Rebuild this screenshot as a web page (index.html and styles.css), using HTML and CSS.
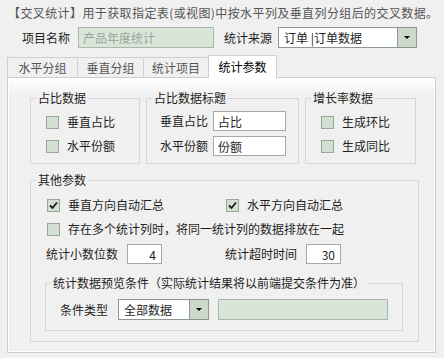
FILE: index.html
```html
<!DOCTYPE html>
<html lang="zh-CN">
<head>
    <meta charset="UTF-8">
    <meta name="viewport" content="width=device-width, initial-scale=1.0">
    <title>交叉统计</title>
    <link rel="stylesheet" href="styles.css">
</head>
<body>
    <p class="intro">【交叉统计】用于获取指定表(或视图)中按水平列及垂直列分组后的交叉数据。</p>

    <!-- 项目名称 / 统计来源 -->
    <div class="head-row">
        <label class="lbl">项目名称</label>
        <input class="txt name-input" type="text" value="产品年度统计" disabled>
        <label class="lbl source-lbl">统计来源</label>
        <div class="combo source-combo">
            <span class="combo-text">订单 |订单数据</span>
            <span class="combo-btn"></span>
        </div>
    </div>

    <div class="tabs">
        <div class="tab">水平分组</div>
        <div class="tab">垂直分组</div>
        <div class="tab">统计项目</div>
        <div class="tab active">统计参数</div>
    </div>

    <div class="panel">
        <div class="top-groups">
            <fieldset class="group">
                <legend>占比数据</legend>
                <div class="checks">
                    <label class="check"><span class="box"></span>垂直占比</label>
                    <label class="check"><span class="box"></span>水平份额</label>
                </div>
            </fieldset>

            <fieldset class="group">
                <legend>占比数据标题</legend>
                <div class="titles">
                    <div class="field">
                        <label>垂直占比</label>
                        <input class="txt title-input" type="text" value="占比">
                    </div>
                    <div class="field">
                        <label>水平份额</label>
                        <input class="txt title-input" type="text" value="份额">
                    </div>
                </div>
            </fieldset>

            <fieldset class="group">
                <legend>增长率数据</legend>
                <div class="checks">
                    <label class="check"><span class="box"></span>生成环比</label>
                    <label class="check"><span class="box"></span>生成同比</label>
                </div>
            </fieldset>
        </div>

        <fieldset class="group other">
            <legend>其他参数</legend>
            <div class="other-body">
                <div class="check-grid">
                    <label class="check">
                        <span class="box"><svg width="9" height="9" viewBox="0 0 9 9"><polyline points="1,4.5 3.5,7 8,1.5" fill="none" stroke="#1a1a1a" stroke-width="1.8"/></svg></span>垂直方向自动汇总
                    </label>
                    <label class="check">
                        <span class="box"><svg width="9" height="9" viewBox="0 0 9 9"><polyline points="1,4.5 3.5,7 8,1.5" fill="none" stroke="#1a1a1a" stroke-width="1.8"/></svg></span>水平方向自动汇总
                    </label>
                    <label class="check wide"><span class="box"></span>存在多个统计列时，将同一统计列的数据排放在一起</label>
                </div>

                <div class="field-row">
                    <div class="field">
                        <label>统计小数位数</label>
                        <input class="txt num-input" type="text" value="4">
                    </div>
                    <div class="field">
                        <label>统计超时时间</label>
                        <input class="txt num-input" type="text" value="30">
                    </div>
                </div>

                <fieldset class="group preview">
                    <legend>统计数据预览条件（实际统计结果将以前端提交条件为准）</legend>
                    <div class="preview-body">
                        <label>条件类型</label>
                        <div class="combo cond-combo">
                            <span class="combo-text">全部数据</span>
                            <span class="combo-btn"></span>
                        </div>
                        <input class="txt cond-input" type="text" value="" disabled>
                    </div>
                </fieldset>
            </div>
        </fieldset>
    </div>
</body>
</html>
```

FILE: styles.css
```css
body {
    margin: 0;
    background-color: #f0f0f0;
    font-family: "Noto Sans CJK SC", "Noto Sans", sans-serif;
    font-size: 12px;
    line-height: 16px;
    color: #1e1e1e;
}

.intro {
    margin: 5px 0 0 8px;
    color: #555;
    letter-spacing: 0.4px;
}

.txt {
    box-sizing: border-box;
    height: 21px;
    margin: 0;
    padding: 0 4px;
    border: 1px solid #a3aca3;
    background: #fff;
    font: inherit;
    color: #1e1e1e;
    outline: none;
}
.txt:disabled {
    background: #d9e5d9;
    border-color: #a9b9a9;
    color: #9ba59b;
}

.combo {
    box-sizing: border-box;
    display: flex;
    height: 21px;
    border: 1px solid #8f998f;
    background: #fff;
}
.combo-text {
    flex: 1;
    padding-left: 5px;
    line-height: 19px;
}
.combo-btn {
    width: 18px;
    display: flex;
    align-items: center;
    justify-content: center;
    background: #cbd9cb;
    border-left: 1px solid #8f998f;
}
.combo-btn::after {
    content: "";
    border-left: 3px solid transparent;
    border-right: 3px solid transparent;
    border-top: 3px solid #000;
}

/* top row */
.head-row {
    display: flex;
    align-items: center;
    height: 21px;
    margin-top: 6px;
    padding-left: 22px;
}
.name-input {
    width: 136px;
    margin-left: 8px;
}
.source-lbl {
    margin-left: 10px;
}
.source-combo {
    width: 139px;
    margin-left: 6px;
}

/* tabs */
.tabs {
    display: flex;
    align-items: flex-end;
    height: 22px;
    margin: 7px 0 0 7px;
}
.tab {
    box-sizing: border-box;
    height: 20px;
    border-top: 1px solid #d0d0d0;
    border-left: 1px solid #d0d0d0;
    text-align: center;
    line-height: 19px;
    color: #555;
}
.tab:nth-child(1) { width: 70px; }
.tab:nth-child(2) { width: 66px; }
.tab:nth-child(3) { width: 65px; }
.tab.active {
    position: relative;
    z-index: 1;
    width: 69px;
    height: 23px;
    margin-bottom: -1px;
    border-right: 1px solid #d0d0d0;
    background: #fff;
    color: #000;
    line-height: 22px;
}

/* panel */
.panel {
    box-sizing: border-box;
    width: 429px;
    height: 276px;
    margin-left: 7px;
    padding: 12px 0 0 22px;
    border: 1px solid #cdcdcd;
    background: linear-gradient(#fff, #f0f0f0 18px);
    box-shadow: inset 1px 1px 0 #fff, inset -1px -1px 0 #fff;
}

.top-groups {
    display: grid;
    grid-template-columns: 110px 153px 111px;
    column-gap: 6px;
}

.group {
    margin: 0;
    padding: 0;
    min-width: 0;
    border: 1px solid #d6d6d6;
}
.group legend {
    margin-left: 5px;
    padding: 0 2px;
}

.checks {
    padding: 4px 0 5px 15px;
}
.check {
    display: flex;
    align-items: center;
    height: 24px;
}
.box {
    box-sizing: border-box;
    width: 13px;
    height: 13px;
    margin-right: 8px;
    display: flex;
    align-items: center;
    justify-content: center;
    border: 1px solid #98a898;
    background: #d2dfd2;
}

.titles {
    display: flex;
    flex-direction: column;
    gap: 5px;
    padding: 5px 0 7px 13px;
}
.field {
    display: flex;
    align-items: center;
}
.title-input {
    width: 73px;
    height: 20px;
    margin-left: 5px;
}

/* other params */
.other {
    width: 387px;
    margin-top: 8px;
}
.other-body {
    padding: 5px 0 10px 14px;
}
.check-grid {
    display: grid;
    grid-template-columns: 179px auto;
    padding-left: 2px;
}
.check.wide {
    grid-column: 1 / 3;
}
.field-row {
    display: grid;
    grid-template-columns: 179px auto;
    height: 20px;
    margin-top: 3px;
    padding-left: 1px;
}
.num-input {
    width: 35px;
    height: 20px;
    margin-left: 9px;
    padding-right: 5px;
    text-align: right;
}

.preview {
    width: 358px;
    margin-top: 11px;
    box-sizing: border-box;
}
.preview-body {
    display: flex;
    align-items: center;
    padding: 8px 0 10px 14px;
}
.cond-combo {
    width: 91px;
    margin-left: 10px;
}
.cond-input {
    width: 170px;
    margin-left: 9px;
}
```
